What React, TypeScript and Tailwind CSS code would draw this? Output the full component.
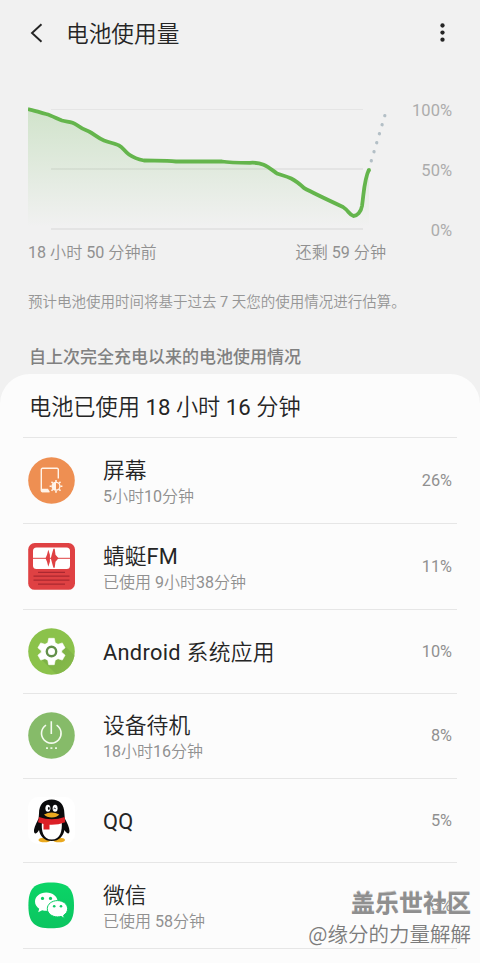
import React from 'react';

interface UsageItem {
  id: string;
  name: string;
  detail?: string;
  percent: string;
  height: string;
  icon: React.ReactNode;
}

const ScreenIcon = () => (
  <svg width="48" height="48" viewBox="0 0 48 48" fill="none">
    <circle cx="23.5" cy="23.5" r="23.3" fill="#ee8f52" />
    <path d="M21 34.5h-6.500a1.200 1.200 0 0 1-1.200-1.200V12.500a1.200 1.200 0 0 1 1.200-1.200h14.600a1.200 1.200 0 0 1 1.200 1.200V21.500" stroke="#fff3e8" strokeWidth="1.4" />
    <path d="M13 31.800h7l2 3.400h-8z" fill="#fff3e8" />
    <circle cx="28" cy="29.300" r="3.9" stroke="#fff3e8" strokeWidth="1.3" />
    <path d="M28 25.300a4 4 0 0 0 0 8z" fill="#fff3e8" />
    <path d="M28 22.900v2M28 33.700v2M21.600 29.300h2M32.400 29.300h2M23.500 24.800l1.400 1.400M31.100 32.400l1.400 1.400M23.500 33.800l1.400-1.400M31.100 26.200l1.400-1.400" stroke="#fff3e8" strokeWidth="1.6" />
  </svg>
);

const RadioIcon = () => (
  <svg width="48" height="48" viewBox="0 0 48 48" fill="none">
    <rect x="0.2" y="0" width="46.8" height="46.8" rx="6.5" fill="#df4143" />
    <rect x="5" y="4.600" width="37" height="21.400" rx="3.5" fill="#fff" />
    <path d="M5 15.300h37" stroke="#df4143" strokeWidth="1" />
    <path d="M17.500 15.300l1.500-3.500 1.300-5 1.600 5v7l-1.600 5-1.300-5zM22.800 15.300l1.200-4.500 1.400-5h1.300l.8 6 3 3.500-3 3.500-.8 6h-1.300l-1.400-5z" fill="#df4143" />
    <path d="M10 29.300h27M5.500 33.100h36M5.500 37.200h36M10 41.100h27" stroke="#ab2830" strokeWidth="1.3" />
  </svg>
);

const AndroidIcon = () => (
  <svg width="48" height="48" viewBox="0 0 48 48" fill="none">
    <defs>
      <clipPath id="android-disc">
        <circle cx="23.5" cy="23.5" r="23.3" />
      </clipPath>
      <linearGradient id="android-shadow" x1="24" y1="24" x2="42" y2="42" gradientUnits="userSpaceOnUse">
        <stop offset="0" stopColor="#7cb145" />
        <stop offset="1" stopColor="#86ba4a" />
      </linearGradient>
    </defs>
    <circle cx="23.5" cy="23.5" r="23.3" fill="#8bc24b" />
    <path d="M35 16l13 13v19H30L14 32z" fill="url(#android-shadow)" clipPath="url(#android-disc)" />
    <path
      d="M20.700 10.300h5.600l.9 4.400 2.800 1.600 4.300-1.400 2.800 4.900-3.400 3v1.400l3.400 3-2.800 4.900-4.300-1.400-2.800 1.600-.9 4.400h-5.600l-.9-4.400-2.800-1.600-4.300 1.400-2.800-4.900 3.400-3v-1.400l-3.400-3 2.800-4.900 4.300 1.400 2.800-1.600z"
      fill="#fff"
      stroke="#fff"
      strokeWidth="0.6"
      strokeLinejoin="round"
    />
    <circle cx="23.500" cy="23.500" r="4.700" fill="#fff" stroke="#63904a" strokeWidth="2.400" />
  </svg>
);

const StandbyIcon = () => (
  <svg width="48" height="48" viewBox="0 0 48 48" fill="none">
    <circle cx="23.5" cy="23.5" r="23.3" fill="#86bb69" />
    <path d="M18 13.100a9.800 9.800 0 1 0 10.600 0M23.300 9.300v12.600" stroke="#f4fbef" strokeWidth="1.600" />
    <path d="M18 36.200h2M22.400 36.200h2M27 36.200h2" stroke="#e8f5df" strokeWidth="1.800" />
  </svg>
);

const PenguinIcon = () => (
  <svg width="48" height="48" viewBox="0 0 48 48" fill="none">
    <rect x="0" y="0" width="47" height="47" rx="10" fill="#fff" />
    <ellipse cx="16.500" cy="43" rx="6" ry="2.300" fill="#eaa91f" />
    <ellipse cx="31" cy="43" rx="6" ry="2.300" fill="#eaa91f" />
    <path d="M11 16.500C11 7.500 16 2.600 23.700 2.600S36.400 7.500 36.400 16.500l.4 5c2.300 4 4.700 9 4.700 12.500 0 1.500-.6 2.800-1.500 2.500-1.200-.3-2.600-2-3.600-3.500-1 6-5 11-12.700 11S12 39 11 33c-1 1.500-2 3.200-3.300 3.500-1 .3-1.700-1-1.700-2.500 0-3.500 2.700-8.500 4.600-12.500z" fill="#0b0b0c" />
    <path d="M14 25c-1 8.500 1 17.600 9.700 17.600S34.500 33.500 33.700 25l-5-1H18z" fill="#fff" />
    <ellipse cx="19.900" cy="11.300" rx="2.500" ry="3.500" fill="#fff" />
    <ellipse cx="27.100" cy="11.300" rx="2.500" ry="3.500" fill="#fff" />
    <ellipse cx="20.800" cy="11.500" rx=".9" ry="1.400" fill="#111" />
    <path d="M25.700 11.800q1.200-1.500 2 0" stroke="#111" strokeWidth="1" />
    <path d="M16 17.600q7.700-4.400 15.300 0-2.500 3-7.600 3t-7.700-3z" fill="#eaa91f" />
    <path d="M11 20q12.700 4.500 25.700 0l.5 5.200q-8 3-15.700 2.500v4.800h-6v-5.500l-5.500-1.800z" fill="#dc2027" />
  </svg>
);

const WechatIcon = () => (
  <svg width="48" height="48" viewBox="0 0 48 48" fill="none">
    <defs>
      <linearGradient id="wechat-bg" x1="0" y1="0" x2="0" y2="1">
        <stop offset="0" stopColor="#0bd567" />
        <stop offset="1" stopColor="#0bc560" />
      </linearGradient>
    </defs>
    <path d="M23 .4C40 .4 46 6.400 46 23.400S40 46.200 23 46.200.4 40.400 .4 23.400 6 .4 23 .4z" fill="url(#wechat-bg)" />
    <path d="M18.300 10.400C11.800 10.400 7 14.400 7 19.600c0 3 1.600 5.500 4.200 7.200l-1 3.500 4-2.100c1.300.4 2.700.6 4.100.6 6.500 0 11.300-4 11.300-9.200S24.800 10.400 18.300 10.400z" fill="#fff" />
    <path d="M29.500 18.600c-5.700 0-10.200 3.600-10.200 8.100s4.500 8.200 10.200 8.200c1.200 0 2.400-.2 3.500-.5l3.400 1.900-.8-3c2.500-1.500 4-3.900 4-6.600 0-4.500-4.500-8.100-10.100-8.100z" fill="#fff" stroke="#0bcc63" strokeWidth="1" />
    <circle cx="14.500" cy="16.400" r="1.600" fill="#0bcc63" />
    <circle cx="22.500" cy="16.400" r="1.600" fill="#0bcc63" />
    <circle cx="26.200" cy="24.200" r="1.300" fill="#0bcc63" />
    <circle cx="33" cy="24.200" r="1.300" fill="#0bcc63" />
  </svg>
);

const items: UsageItem[] = [
  { id: 'screen', name: '屏幕', detail: '5小时10分钟', percent: '26%', height: 'h-[86px]', icon: <ScreenIcon /> },
  { id: 'fm', name: '蜻蜓FM', detail: '已使用 9小时38分钟', percent: '11%', height: 'h-[86px]', icon: <RadioIcon /> },
  { id: 'android', name: 'Android 系统应用', percent: '10%', height: 'h-[84px]', icon: <AndroidIcon /> },
  { id: 'standby', name: '设备待机', detail: '18小时16分钟', percent: '8%', height: 'h-[85px]', icon: <StandbyIcon /> },
  { id: 'qq', name: 'QQ', percent: '5%', height: 'h-[84px]', icon: <PenguinIcon /> },
  { id: 'wechat', name: '微信', detail: '已使用 58分钟', percent: '3%', height: 'h-[86px]', icon: <WechatIcon /> },
];

const curve =
  'M0 9C5 10 12 12.500 18 14S29 18.700 34 20.500C39 22 44 21.500 48 24.500S56 29.500 61 31.500C66 34 70 38 76 40.500C81 42.500 87 43.500 91 45.500S96 51 101 54.500S111 59.500 116 60.500C129 60.800 138 60.500 148 61.500H194C200 62.500 206 62.800 222 62.800C235 62 240 67 249 73.500C256 76.500 262 75 276 88C285 93 300 100 315 107C321 111 321 114.500 325.500 116C329 116 333 112 334 106C336 92 336 80 341 69.500';

const BatteryChart = () => (
  <svg className="block shrink-0" width="364" height="140" viewBox="0 0 364 140" fill="none">
    <defs>
      <linearGradient id="usage-fill" x1="0" y1="9" x2="0" y2="127" gradientUnits="userSpaceOnUse">
        <stop offset="0" stopColor="#64b54c" stopOpacity="0.23" />
        <stop offset="1" stopColor="#64b54c" stopOpacity="0" />
      </linearGradient>
    </defs>
    <path d="M23 9.500h312" stroke="#e5e5e5" />
    <path d="M23 69h312M23 129h312" stroke="#e4e4e4" strokeWidth="2" />
    <path d={`${curve}V127H0z`} fill="url(#usage-fill)" />
    <path d={curve} stroke="#64b54c" strokeWidth="3.800" />
    <circle cx="341" cy="70" r="1.900" fill="#64b54c" />
    <path d="M343.300 60.800L356.800 15.600" stroke="#b3bfc6" strokeWidth="3.300" strokeDasharray="0.1 9.320" strokeLinecap="round" />
  </svg>
);

const UsageRow: React.FC<{ item: UsageItem }> = ({ item }) => (
  <div className={`flex items-center border-b border-[#e6e6e6] pl-[5px] pr-[5px] ${item.height}`}>
    {item.icon}
    <div className={`ml-[27px] flex-1 ${item.detail ? 'pt-[4px]' : 'pt-[2px] tracking-[0.3px]'}`}>
      <div className="text-[21.800px] leading-[27px] text-[#252525]">{item.name}</div>
      {item.detail && <div className="text-[16px] leading-[25px] text-[#909090]">{item.detail}</div>}
    </div>
    <div className="pt-px text-[16.300px] text-[#909090]">{item.percent}</div>
  </div>
);

const App: React.FC = () => {
  return (
    <div className="relative h-[963px] w-[480px] overflow-hidden bg-[#f1f1f1] font-[Roboto,'Noto_Sans_CJK_SC_DemiLight','Noto_Sans_CJK_SC',sans-serif] font-normal">
      <header className="flex h-[66px] items-center pl-[30px] pr-[35px]">
        <svg width="14" height="20" viewBox="0 0 14 20" fill="none">
          <path d="M11.500 1.200L2 10l9.500 8.800" stroke="#252525" strokeWidth="1.900" />
        </svg>
        <h1 className="ml-[22px] flex-1 pt-[4px] text-[22.700px] text-[#252525]">电池使用量</h1>
        <svg width="5" height="20" viewBox="0 0 5 20" fill="#252525">
          <circle cx="2.500" cy="2.500" r="2.150" />
          <circle cx="2.500" cy="9.600" r="2.150" />
          <circle cx="2.500" cy="16.700" r="2.150" />
        </svg>
      </header>

      <section className="h-[308px] pl-[28px] pr-[28px] pt-[34px]">
        <div className="flex justify-between">
          <BatteryChart />
          <div className="flex flex-col pt-px text-right text-[16.500px] leading-[20px] text-[#acacac]">
            <span className="h-[60px]">100%</span>
            <span className="h-[60px]">50%</span>
            <span>0%</span>
          </div>
        </div>
        <div className="flex w-[358px] justify-between text-[16.100px] leading-[24px] text-[#909090]">
          <span>18 小时 50 分钟前</span>
          <span>还剩 59 分钟</span>
        </div>
        <p className="mt-[26px] whitespace-nowrap text-[14.500px] leading-[24px] text-[#969696]">
          预计电池使用时间将基于过去 7 天您的使用情况进行估算。
        </p>
        <h2 className="mt-[29px] pl-px font-['Noto_Sans_CJK_SC',sans-serif] text-[17px] font-medium leading-[24px] text-[#808080]">
          自上次完全充电以来的电池使用情况
        </h2>
      </section>

      <section className="h-[600px] rounded-t-[30px] bg-[#fcfcfc] px-[23px]">
        <div className="flex h-[64px] items-center border-b border-[#e6e6e6] pl-[6px] pt-[4px] text-[22.200px] text-[#252525]">
          电池已使用 18 小时 16 分钟
        </div>
        {items.map((item) => (
          <UsageRow key={item.id} item={item} />
        ))}
      </section>

      {/* community watermark */}
      <div className="absolute bottom-[15px] right-[9px] text-right font-['Noto_Sans_CJK_SC',sans-serif]">
        <div className="text-[24px] font-bold leading-[32px] text-[#8f8f8f] [text-shadow:0_-1px_0_#c8c8c8]">盖乐世社区</div>
        <div className="text-[20.500px] font-[350] leading-[30px] text-[#7c7c7c]">@缘分的力量解解</div>
      </div>
    </div>
  );
};

export default App;
